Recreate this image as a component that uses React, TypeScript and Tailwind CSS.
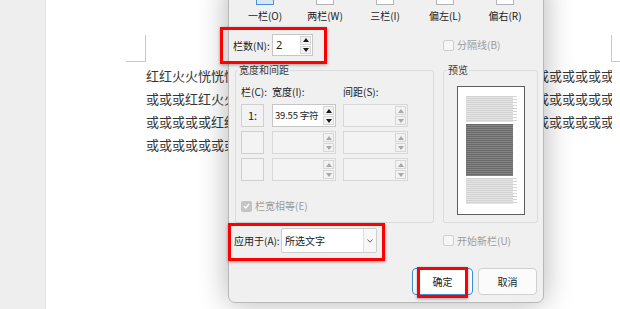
import React from 'react'

const presets = ['一栏(O)', '两栏(W)', '三栏(I)', '偏左(L)', '偏右(R)']

const docLines = [
  '红红火火恍恍惚惚或或或或或或或或或或或或或或或或或或或或或或或或或或或或或或或或或或',
  '或或或红红火火恍恍惚惚或或或或或或或或或或或或或或或或或或或或或或或或或或或或或或或',
  '或或或或或红红火火恍恍惚惚或或或或或或或或或或或或或或或或或或或或或或或或或或或或或',
  '或或或或或或或或或或或或或',
]

const ui = { fontFamily: '"Noto Sans CJK SC", "Noto Sans", sans-serif' }

function Arrow({ up, disabled }: { up?: boolean; disabled?: boolean }) {
  return (
    <svg width="6" height="4" viewBox="0 0 6 4">
      <path d={up ? 'M0 4 L3 0 L6 4 Z' : 'M0 0 L3 4 L6 0 Z'} fill={disabled ? '#a8a8a8' : '#1a1a1a'} />
    </svg>
  )
}

function Spin({ disabled }: { disabled?: boolean }) {
  return (
    <div className="flex flex-col gap-[1px] py-[1px] pr-[1px] w-[12px] shrink-0">
      <div className="flex-1 flex items-center justify-center bg-[#f2f2f2] border border-[#d6d6d6]">
        <Arrow up disabled={disabled} />
      </div>
      <div className="flex-1 flex items-center justify-center bg-[#f2f2f2] border border-[#d6d6d6]">
        <Arrow disabled={disabled} />
      </div>
    </div>
  )
}

function Box({ checked, disabled, label }: { checked?: boolean; disabled?: boolean; label: string }) {
  return (
    <div className="flex items-center gap-[3px]">
      <div
        className={`w-[11px] h-[11px] rounded-[2px] flex items-center justify-center ${
          checked ? 'bg-[#c4c4c4]' : 'bg-[#f6f6f6] border border-[#cfcfcf]'
        }`}
      >
        {checked && (
          <svg width="7" height="6" viewBox="0 0 7 6">
            <path d="M0.8 3 L2.8 5 L6.2 0.8" stroke="#fff" strokeWidth="1.2" fill="none" />
          </svg>
        )}
      </div>
      <span className={`text-[10px] leading-[14px] ${disabled ? 'text-[#9c9c9c]' : 'text-[#1b1b1b]'}`}>{label}</span>
    </div>
  )
}

// block of text lines in the preview page
function Lines({ dark, h }: { dark?: boolean; h: string }) {
  return (
    <div className={`flex ${h}`}>
      <div
        className={`w-[47px] ${
          dark
            ? 'bg-[repeating-linear-gradient(to_bottom,#6a6a6a_0px,#6a6a6a_1px,#838383_1px,#838383_2px)]'
            : 'bg-[repeating-linear-gradient(to_bottom,#d2d2d2_0px,#d2d2d2_1px,#e4e4e4_1px,#e4e4e4_2px)]'
        }`}
      />
      {!dark && (
        <div className="w-[4px] bg-[repeating-linear-gradient(to_bottom,#d4d4d4_0px,#d4d4d4_1px,#ffffff_1px,#ffffff_3px)]" />
      )}
    </div>
  )
}

export default function App() {
  return (
    <div className="relative w-[620px] h-[309px] overflow-hidden flex bg-[#eeeeee]" style={ui}>
      <div className="w-[46px] shrink-0 border-r border-[#e3e3e3]" />

      {/* document page */}
      <div className="relative flex-1 bg-white pl-[100px] pt-[64px]">
        <div className="absolute left-[99px] top-[35px] w-[1px] h-[27px] bg-[#c9c9c9]" />
        <div className="absolute left-[80px] top-[61px] w-[20px] h-[1px] bg-[#c9c9c9]" />
        <div className="absolute left-[565px] top-[35px] w-[1px] h-[27px] bg-[#c9c9c9]" />
        <div className="absolute left-[565px] top-[61px] w-[20px] h-[1px] bg-[#c9c9c9]" />
        {docLines.map((line, i) => (
          <div
            key={i}
            className="w-[466px] overflow-hidden whitespace-nowrap text-[13px] leading-[23px] text-[#353535]"
          >
            {line}
          </div>
        ))}
      </div>

      {/* Columns dialog */}
      <div className="absolute left-[228px] top-[-20px] w-[316px] h-[323px] bg-[#f0f0f0] border border-[#b9b9b9] rounded-b-[7px] shadow-[0_0_30px_rgba(0,0,0,0.3)] text-[#1b1b1b] text-[10px]">
        <div className="grid grid-cols-5 w-[300px] ml-[6px] pt-[2px]">
          {presets.map((p, i) => (
            <div key={p} className="flex flex-col items-center">
              <div
                className={`w-[18px] h-[22px] ${
                  i === 0 ? 'bg-[#d6e8f8] border border-[#4b8fd6]' : 'bg-white border border-[#b4b4b4]'
                }`}
              />
              <span className="mt-[4px] leading-[14px]">{p}</span>
            </div>
          ))}
        </div>

        <div className="flex items-center mt-[11px] pl-[4px] h-[22px]">
          <span className="w-[39px]">栏数(N):</span>
          <div className="flex w-[41px] h-[22px] bg-white border border-[#c6c6c6]">
            <span className="flex-1 pl-[3px] text-[11px] leading-[20px]" style={{ fontFamily: '"Noto Sans", sans-serif' }}>
              2
            </span>
            <Spin />
          </div>
          <div className="ml-[130px]">
            <Box disabled label="分隔线(B)" />
          </div>
        </div>

        <div className="flex items-stretch gap-[9px] ml-[6px] mt-[7px]">
          <fieldset className="w-[199px] border border-[#dcdcdc] rounded-[2px] pl-[5px] pt-[8px] pb-[9px]">
            <legend className="ml-[-3px] px-[1px] leading-[14px] text-[#3a3a3a]">宽度和间距</legend>
            <div className="flex leading-[14px]">
              <span className="w-[31px]">栏(C):</span>
              <span className="w-[71px]">宽度(I):</span>
              <span>间距(S):</span>
            </div>
            <div className="flex flex-col gap-[4px] mt-[5px]">
              {[0, 1, 2].map((r) => (
                <div key={r} className="flex gap-[8px] h-[23px]">
                  <div className="w-[23px] flex items-center justify-center bg-[#f3f3f3] border border-[#cfcfcf] text-[11px]">
                    {r === 0 ? '1:' : ''}
                  </div>
                  <div
                    className={`w-[64px] flex border ${
                      r === 0 ? 'bg-white border-[#c6c6c6]' : 'bg-[#f3f3f3] border-[#d8d8d8]'
                    }`}
                  >
                    <span className="flex-1 pl-[2px] text-[9.5px] tracking-[-0.2px] leading-[21px] whitespace-nowrap overflow-hidden">
                      {r === 0 ? '39.55 字符' : ''}
                    </span>
                    <Spin disabled={r !== 0} />
                  </div>
                  <div className="w-[65px] flex ml-[-1px] bg-[#f3f3f3] border border-[#d8d8d8]">
                    <span className="flex-1" />
                    <Spin disabled />
                  </div>
                </div>
              ))}
            </div>
            <div className="mt-[18px]">
              <Box checked disabled label="栏宽相等(E)" />
            </div>
          </fieldset>

          <fieldset className="w-[95px] border border-[#dcdcdc] rounded-[2px] flex flex-col items-center pt-[9px] pb-[7px]">
            <legend className="ml-[3px] px-[1px] leading-[14px] text-[#3a3a3a]">预览</legend>
            <div className="w-[68px] h-[129px] bg-white border-[1.5px] border-[#5e5e5e] pl-[8px] pt-[9px] flex flex-col gap-[2px]">
              <Lines h="h-[26px]" />
              <Lines dark h="h-[52px]" />
              <Lines h="h-[26px]" />
            </div>
          </fieldset>
        </div>

        <div className="flex items-center mt-[5px] pl-[5px] h-[25px]">
          <span className="w-[47px]">应用于(A):</span>
          <div className="flex w-[96px] h-[25px] bg-white border border-[#cdcdcd] rounded-[2px]">
            <span className="flex-1 pl-[3px] text-[10px] leading-[23px]">所选文字</span>
            <div className="w-[13px] flex items-center justify-center border-l border-[#dedede] bg-[#f7f7f7]">
              <svg width="6" height="4" viewBox="0 0 6 4">
                <path d="M0.5 0.5 L3 3.2 L5.5 0.5" stroke="#555" strokeWidth="0.9" fill="none" />
              </svg>
            </div>
          </div>
          <div className="ml-[66px]">
            <Box disabled label="开始新栏(U)" />
          </div>
        </div>

        <div className="flex justify-end gap-[5px] mt-[15px] pr-[6px]">
          <button className="w-[61px] h-[27px] bg-white border border-[#3c8ad8] rounded-[4px] text-[10px] text-[#1b1b1b]">
            确定
          </button>
          <button className="w-[59px] h-[27px] bg-[#fbfbfb] border border-[#d0d0d0] rounded-[4px] text-[10px] text-[#1b1b1b]">
            取消
          </button>
        </div>
      </div>

      {/* red annotation frames */}
      <div className="absolute left-[220px] top-[27px] w-[107px] h-[37px] border-[3px] border-[#f00] shadow-[0_1px_3px_rgba(0,0,0,0.35)]" />
      <div className="absolute left-[228px] top-[223px] w-[157px] h-[38px] border-[3px] border-[#f00] shadow-[0_1px_3px_rgba(0,0,0,0.35)]" />
      <div className="absolute left-[417px] top-[267px] w-[51px] h-[31px] border-[3px] border-[#f00] shadow-[0_1px_3px_rgba(0,0,0,0.35)]" />
    </div>
  )
}
